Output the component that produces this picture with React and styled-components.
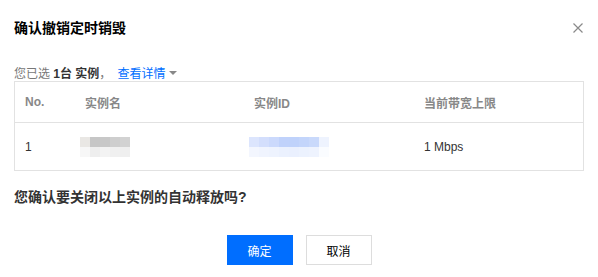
import styled, { createGlobalStyle } from "styled-components";

const GlobalStyle = createGlobalStyle`
    body {
        margin: 0;
        background: #fff;
        font-family: "Liberation Sans", "Noto Sans CJK SC", sans-serif;
    }
`;

const nameBlur = [
    ["#e9e7e4", "#c6c6c6", "#c8c8c8", "#cecece", "#d2d2d2"],
    ["#f7f7f7", "#eeeeee", "#f3f3f3", "#f0f0f0", "#efefef"],
];

const idBlur = [
    ["#dce5fd", "#d3defc", "#cbd9fc", "#c0d2fb", "#bfd2fb", "#c3d5fb", "#c9d9fb", "#eef3fe"],
    ["#f3f6fe", "#f0f4fe", "#eef3fe", "#ebf1fe", "#eaf0fe", "#ecf2fe", "#eef3fe", "#fafcff"],
];

export default function App () {

    return (
        <>
            <GlobalStyle />
            <Dialog>
                <Header>
                    <Title>确认撤销定时销毁</Title>
                    <Close>
                        <svg width="10" height="10" viewBox="0 0 10 10">
                            <path d="M0.5 0.5 L9.5 9.5 M9.5 0.5 L0.5 9.5" stroke="#8a8a8a" strokeWidth="1.2" />
                        </svg>
                    </Close>
                </Header>
                <Selected>
                    您已选 <Strong>1台 实例</Strong>，
                    <Detail>查看详情</Detail>
                    <Caret />
                </Selected>
                <Table>
                    <HeadRow>
                        <Cell>No.</Cell>
                        <Cell>实例名</Cell>
                        <Cell>实例ID</Cell>
                        <Cell>当前带宽上限</Cell>
                    </HeadRow>
                    <BodyRow>
                        <Cell>1</Cell>
                        <Cell><Blur cells={nameBlur} /></Cell>
                        <Cell><Blur cells={idBlur} /></Cell>
                        <Cell>1 Mbps</Cell>
                    </BodyRow>
                </Table>
                <Question>您确认要关闭以上实例的自动释放吗?</Question>
                <Footer>
                    <Button $primary>确定</Button>
                    <Button>取消</Button>
                </Footer>
            </Dialog>
        </>
    );

}

function Blur ({ cells }) {

    return (
        <BlurBox>
            {cells.map((row, r) => (
                <BlurRow key={r}>
                    {row.map((c, i) => <Pixel key={i} style={{ background: c }} />)}
                </BlurRow>
            ))}
        </BlurBox>
    );

}

const Dialog = styled.div`

    width: 598px;
    height: 277px;
    box-sizing: border-box;

    padding: 18px 14px 0 14px;

    display: flex;
    flex-direction: column;

    color: #333;

`;

const Header = styled.div`

    height: 20px;

    display: flex;
    align-items: center;
    justify-content: space-between;

`;

const Title = styled.div`

    font-size: 14px;
    font-weight: bold;
    line-height: 20px;
    color: #000;

`;

const Close = styled.div`

    width: 10px;
    height: 10px;

    margin-right: 1px;

    display: flex;

`;

const Selected = styled.div`

    height: 18px;

    margin-top: 25px;

    display: flex;
    align-items: center;

    font-size: 12px;
    color: #777;
    white-space: pre;

`;

const Strong = styled.span`

    font-weight: bold;
    color: #333;

`;

const Detail = styled.span`

    margin-left: 6px;

    color: #006eff;

`;

const Caret = styled.span`

    width: 0;
    height: 0;

    margin-left: 4px;
    margin-top: 1px;

    border-left: 4px solid transparent;
    border-right: 4px solid transparent;
    border-top: 4px solid #888;

`;

const Table = styled.div`

    width: 570px;
    box-sizing: border-box;

    border: 1px solid #e2e2e2;

    font-size: 12px;

`;

const HeadRow = styled.div`

    height: 40px;

    display: grid;
    grid-template-columns: 60px 169px 170px 1fr;
    align-items: center;

    border-bottom: 1px solid #e2e2e2;

    font-weight: bold;
    color: #888;

`;

const BodyRow = styled.div`

    height: 47px;

    display: grid;
    grid-template-columns: 60px 169px 170px 1fr;
    align-items: center;

    color: #333;

`;

const Cell = styled.div`

    padding-left: 10px;

    display: flex;
    align-items: center;

`;

const BlurBox = styled.div`

    margin-left: -5px;

    display: flex;
    flex-direction: column;

`;

const BlurRow = styled.div`

    display: flex;

`;

const Pixel = styled.div`

    width: 10px;
    height: 10px;

`;

const Question = styled.div`

    margin-top: 16px;

    font-size: 14px;
    font-weight: bold;
    line-height: 20px;
    color: #333;

`;

const Footer = styled.div`

    margin-top: 28px;

    display: flex;
    justify-content: center;
    gap: 13px;

`;

const Button = styled.div`

    width: 66px;
    height: 30px;
    box-sizing: border-box;

    display: flex;
    align-items: center;
    justify-content: center;

    background: ${p => p.$primary ? "#006eff" : "#fff"};
    border: 1px solid ${p => p.$primary ? "#006eff" : "#dddddd"};

    font-size: 12px;
    color: ${p => p.$primary ? "#fff" : "#000"};

`;
